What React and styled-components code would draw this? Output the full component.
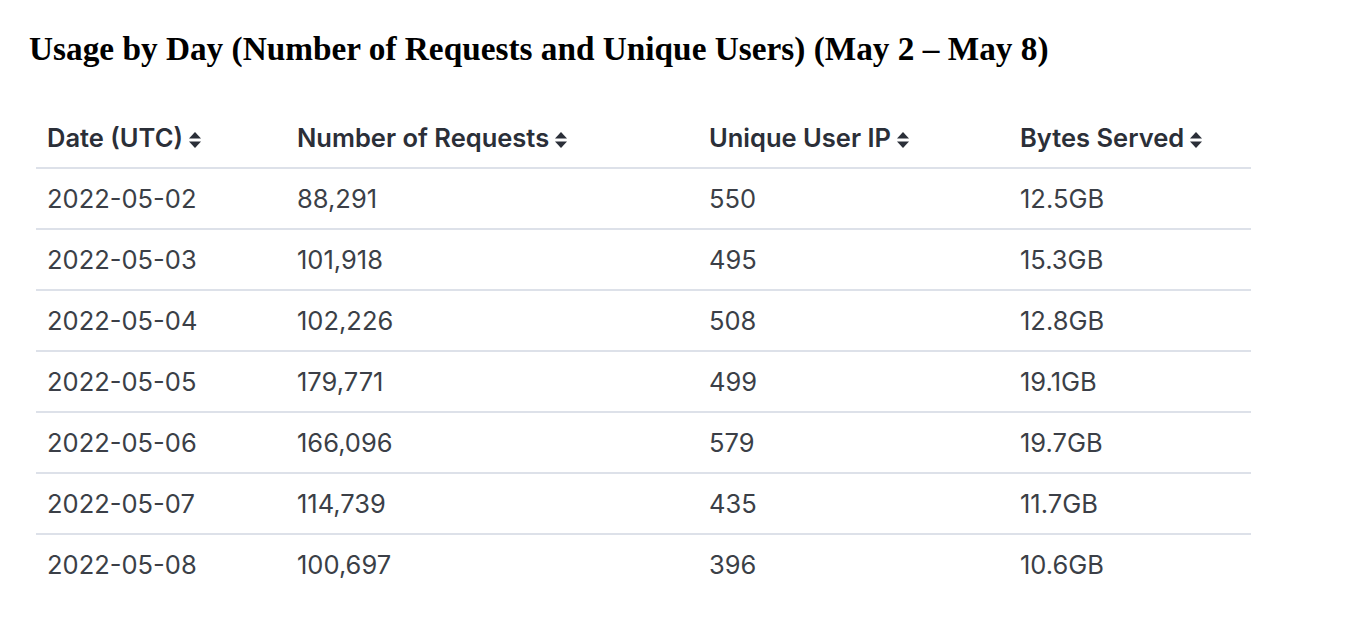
import React from 'react';
import styled, { createGlobalStyle } from 'styled-components';

const GlobalStyle = createGlobalStyle`
	body {
		margin: 0;
		background: #ffffff;
	}
`;

const Page = styled.div`
	padding: 25px 0 0 29px;
	width: 1356px;
	height: 636px;
	box-sizing: border-box;
`;

const Title = styled.h1`
	margin: 0;
	font-family: "Liberation Serif", "Times New Roman", serif;
	font-weight: 700;
	font-size: 33.3px;
	line-height: 48px;
	color: #000;
`;

const Table = styled.table`
	margin: 35px 0 0 7px;
	width: 1215px;
	border-collapse: collapse;
	font-family: Inter, "Noto Sans", sans-serif;
	font-size: 25.5px;
	color: #3b3f47;
	table-layout: fixed;
`;

const HeadCell = styled.th`
	width: ${({ w }) => w - 11}px;
	height: 59px;
	padding: 0 0 0 11px;
	text-align: left;
	font-weight: 600;
	color: #2b2f38;
	border-bottom: 2px solid #dde1e9;
	white-space: nowrap;
`;

const Row = styled.tr`
	border-bottom: ${({ last }) => (last ? 'none' : '2px solid #dde1e9')};
`;

const Cell = styled.td`
	height: 59px;
	padding: 0 0 0 11px;
	white-space: nowrap;
`;

const SortIcon = () => (
	<svg width="14" height="18" viewBox="0 0 14 18" style={{ marginLeft: 5, verticalAlign: -2 }}>
		<path d="M7 1 L13 7.5 H1 Z" fill="#2b2f38" />
		<path d="M7 17 L13 10.5 H1 Z" fill="#2b2f38" />
	</svg>
);

const columns = [
	{ label: 'Date (UTC)', w: 250 },
	{ label: 'Number of Requests', w: 412 },
	{ label: 'Unique User IP', w: 311 },
	{ label: 'Bytes Served', w: 242 }
];

const rows = [
	['2022-05-02', '88,291', '550', '12.5GB'],
	['2022-05-03', '101,918', '495', '15.3GB'],
	['2022-05-04', '102,226', '508', '12.8GB'],
	['2022-05-05', '179,771', '499', '19.1GB'],
	['2022-05-06', '166,096', '579', '19.7GB'],
	['2022-05-07', '114,739', '435', '11.7GB'],
	['2022-05-08', '100,697', '396', '10.6GB']
];

export default function App() {
	return (
		<Page>
			<GlobalStyle />
			<Title>Usage by Day (Number of Requests and Unique Users) (May 2 – May 8)</Title>
			<Table>
				<thead>
					<tr>
						{columns.map((c) => (
							<HeadCell key={c.label} w={c.w}>
								{c.label}
								<SortIcon />
							</HeadCell>
						))}
					</tr>
				</thead>
				<tbody>
					{rows.map((r, i) => (
						<Row key={r[0]} last={i === rows.length - 1}>
							{r.map((v, j) => (
								<Cell key={j}>{v}</Cell>
							))}
						</Row>
					))}
				</tbody>
			</Table>
		</Page>
	);
}
